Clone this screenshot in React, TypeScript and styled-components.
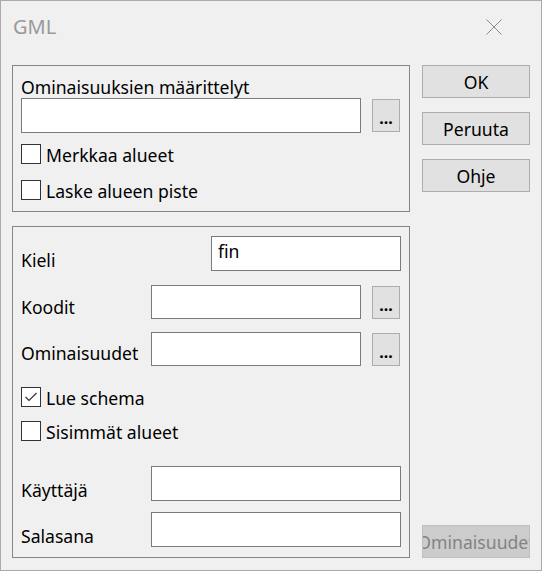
import React from "react";
import styled, { createGlobalStyle } from "styled-components";

const Global = createGlobalStyle`
  html, body { margin: 0; padding: 0; background: #f0f0f0; }
  * { box-sizing: border-box; }
`;

const FONT = `"Noto Sans", "Open Sans", "DejaVu Sans", sans-serif`;

const Window = styled.div`
  width: 542px;
  height: 571px;
  border: 1px solid #aaaaaa;
  background: #f0f0f0;
  display: flex;
  flex-direction: column;
  font-family: ${FONT};
  font-size: 17.6px;
  color: #000;
  overflow: hidden;
`;

const TitleBar = styled.div`
  height: 54px;
  flex: none;
  display: flex;
  align-items: center;
  justify-content: space-between;
  padding: 0 39px 2px 12px;
`;

const Title = styled.div`
  font-size: 20px;
  color: #999999;
  line-height: 24px;
`;

const Body = styled.div`
  flex: 1;
  display: flex;
  gap: 12px;
  padding: 10px 11px 12px 11px;
`;

const LeftCol = styled.div`
  width: 398px;
  display: flex;
  flex-direction: column;
  gap: 14px;
`;

const Group = styled.div<{ $pt: number }>`
  border: 1px solid #858585;
  padding: ${(p) => p.$pt}px 8px 10px 8px;
  display: flex;
  flex-direction: column;
`;

const Label = styled.div`
  line-height: 22px;
  height: 22px;
  white-space: nowrap;
`;

const InputRow = styled.div`
  display: flex;
  align-items: center;
  gap: 11px;
  height: 35px;
`;

const TextBox = styled.div<{ $w: number; $h?: number }>`
  width: ${(p) => p.$w}px;
  height: ${(p) => p.$h ?? 35}px;
  background: #fff;
  border: 1px solid #7a7a7a;
  padding: 3px 6px;
  line-height: 22px;
  flex: none;
`;

const BrowseButton = styled.div`
  width: 28px;
  height: 33px;
  flex: none;
  background: #e1e1e1;
  border: 1px solid #adadad;
  display: flex;
  align-items: flex-end;
  justify-content: center;
  padding-bottom: 7px;
  font-size: 16px;
  font-weight: 700;
  line-height: 12px;
`;

const CheckRow = styled.div<{ $mt: number }>`
  margin-top: ${(p) => p.$mt}px;
  height: 22px;
  display: flex;
  align-items: center;
  gap: 5px;
`;

const Box = styled.div`
  width: 20px;
  height: 20px;
  border: 1px solid #333333;
  background: #fff;
  display: flex;
  align-items: center;
  justify-content: center;
`;

const CheckText = styled.span`
  line-height: 22px;
  padding-top: 2px;
  white-space: nowrap;
`;

const FieldRow = styled.div<{ $mt: number; $h?: number }>`
  margin-top: ${(p) => p.$mt}px;
  height: ${(p) => p.$h ?? 35}px;
  display: grid;
  grid-template-columns: 130px 210px 11px 29px;
  align-items: center;
`;

const FieldLabel = styled.div<{ $pb: number }>`
  grid-column: 1;
  align-self: end;
  line-height: 22px;
  padding-bottom: ${(p) => p.$pb}px;
  white-space: nowrap;
`;

const FieldInput = styled.div<{ $span?: boolean; $w?: number }>`
  grid-column: ${(p) => (p.$span ? "2 / 5" : "2")};
  justify-self: end;
  width: ${(p) => (p.$w ? `${p.$w}px` : "100%")};
  height: 100%;
  background: #fff;
  border: 1px solid #7a7a7a;
  padding: 3px 6px;
  line-height: 22px;
`;

const FieldButton = styled(BrowseButton)`
  grid-column: 4;
`;

const RightCol = styled.div`
  width: 108px;
  display: flex;
  flex-direction: column;
  gap: 14px;
`;

const Button = styled.div<{ $disabled?: boolean }>`
  height: 33px;
  width: 108px;
  display: flex;
  align-items: center;
  justify-content: center;
  background: ${(p) => (p.$disabled ? "#cccccc" : "#e1e1e1")};
  border: 1px solid ${(p) => (p.$disabled ? "#bfbfbf" : "#adadad")};
  color: ${(p) => (p.$disabled ? "#838383" : "#000")};
  white-space: nowrap;
  overflow: hidden;
  line-height: 22px;
  padding-top: 1px;
  ${(p) => (p.$disabled ? "margin-top: auto;" : "")}
`;

const Check = ({ checked }: { checked?: boolean }) => (
  <Box>
    {checked && (
      <svg width="14" height="12" viewBox="0 0 14 12">
        <polyline points="1.5,6 5,9.5 12.5,2" fill="none" stroke="#333" strokeWidth="1.2" />
      </svg>
    )}
  </Box>
);

const CloseIcon = () => (
  <svg width="16" height="16" viewBox="0 0 16 16">
    <path d="M0.5 0.5 L15.5 15.5 M15.5 0.5 L0.5 15.5" stroke="#8a8a8a" strokeWidth="1" fill="none" />
  </svg>
);

export default function App() {
  return (
    <>
      <Global />
      <Window>
        <TitleBar>
          <Title>GML</Title>
          <CloseIcon />
        </TitleBar>
        <Body>
          <LeftCol>
            <Group $pt={10}>
              <Label>Ominaisuuksien määrittelyt</Label>
              <InputRow>
                <TextBox $w={340} />
                <BrowseButton>...</BrowseButton>
              </InputRow>
              <CheckRow $mt={10}>
                <Check />
                <CheckText>Merkkaa alueet</CheckText>
              </CheckRow>
              <CheckRow $mt={14}>
                <Check />
                <CheckText>Laske alueen piste</CheckText>
              </CheckRow>
            </Group>
            <Group $pt={9}>
              <FieldRow $mt={0}>
                <FieldLabel $pb={0}>Kieli</FieldLabel>
                <FieldInput $span $w={190}>fin</FieldInput>
              </FieldRow>
              <FieldRow $mt={14} $h={34}>
                <FieldLabel $pb={1}>Koodit</FieldLabel>
                <FieldInput />
                <FieldButton>...</FieldButton>
              </FieldRow>
              <FieldRow $mt={13} $h={34}>
                <FieldLabel $pb={2}>Ominaisuudet</FieldLabel>
                <FieldInput />
                <FieldButton>...</FieldButton>
              </FieldRow>
              <CheckRow $mt={20}>
                <Check checked />
                <CheckText>Lue schema</CheckText>
              </CheckRow>
              <CheckRow $mt={12}>
                <Check />
                <CheckText>Sisimmät alueet</CheckText>
              </CheckRow>
              <FieldRow $mt={24}>
                <FieldLabel $pb={0}>Käyttäjä</FieldLabel>
                <FieldInput $span />
              </FieldRow>
              <FieldRow $mt={11}>
                <FieldLabel $pb={0}>Salasana</FieldLabel>
                <FieldInput $span />
              </FieldRow>
            </Group>
          </LeftCol>
          <RightCol>
            <Button>OK</Button>
            <Button>Peruuta</Button>
            <Button>Ohje</Button>
            <Button $disabled>Ominaisuudet</Button>
          </RightCol>
        </Body>
      </Window>
    </>
  );
}
